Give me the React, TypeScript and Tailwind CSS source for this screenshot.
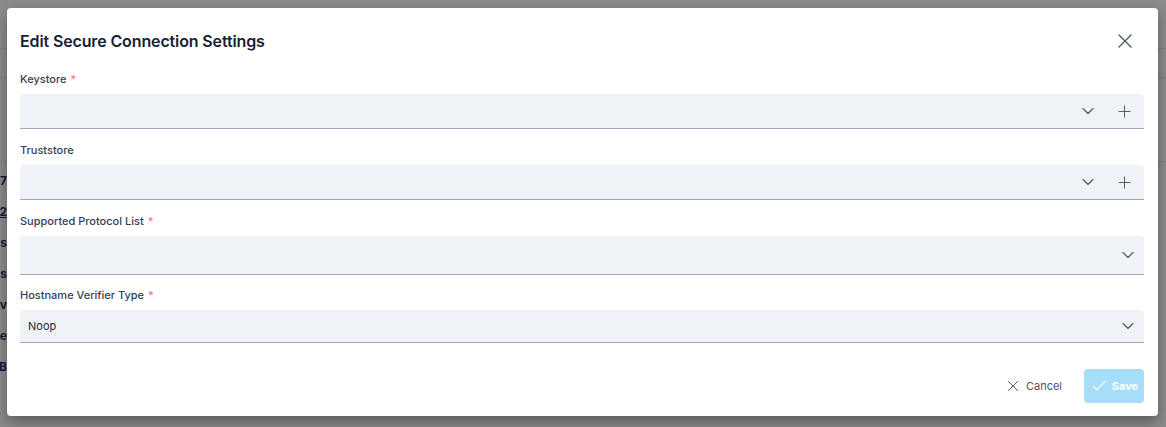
import React from "react";
import { X, ChevronDown, Plus, Check } from "lucide-react";

const font = { fontFamily: "Inter, 'Noto Sans', sans-serif" };

function Label({ text, required }: { text: string; required?: boolean }) {
  return (
    <div className="h-[16px] text-[11px] leading-[16px] font-medium text-[#374151]">
      {text}
      {required && <span className="ml-[4px] text-[#f87171]">*</span>}
    </div>
  );
}

function SelectWithAdd() {
  return (
    <div className="mt-[7px] h-[35px] flex bg-[#eff2f7] rounded-t-[4px]">
      <div className="flex-1 flex items-center justify-end pr-[8px] border-b border-[#9eaabd]">
        <ChevronDown size={20} strokeWidth={1.3} className="text-[#4b5563]" />
      </div>
      <div className="w-[38px] flex items-center justify-center border-b border-[#9eaabd]">
        <Plus size={19} strokeWidth={1.2} className="text-[#4b5563] -ml-[1px]" />
      </div>
    </div>
  );
}

function Select({ h, value }: { h: string; value?: string }) {
  return (
    <div
      className={`mt-[7px] ${h} flex items-center justify-between bg-[#eff2f7] rounded-t-[4px] border-b border-[#9eaabd] pl-[8px] pr-[6px]`}
    >
      <span className="text-[11px] text-[#1f2937]">{value}</span>
      <ChevronDown size={20} strokeWidth={1.3} className="text-[#4b5563]" />
    </div>
  );
}

const rows = ["7", "2", "s", "s", "v", "e", "B"];

export default function App() {
  return (
    <div className="w-[1166px] h-[427px] relative overflow-hidden bg-[#8b8b8b]" style={font}>
      {/* background page */}
      <div className="flex flex-col">
        <div className="h-[49px] border-b border-[#7c7c7c]" />
        <div className="h-[29px] border-b border-[#7c7c7c]" />
        <div className="h-[84px] border-b border-[#7c7c7c]" />
        <div className="flex flex-col pt-[3px]">
          {rows.map((r, i) => (
            <div key={i} className="h-[31px] w-[7px] flex items-center justify-end">
              <span className={`text-[12px] font-bold text-[#0f1b3a] ${i === 1 ? "underline" : ""}`}>
                {r}
              </span>
            </div>
          ))}
        </div>
      </div>

      {/* modal */}
      <div className="absolute left-[7px] top-[8px] w-[1151px] h-[408px] bg-white rounded-[4px] shadow-[0_6px_14px_rgba(0,0,0,0.35)] pl-[13px] pr-[14px] flex flex-col">
        <div className="mt-[21px] h-[24px] flex items-center justify-between">
          <h2 className="text-[16px] font-semibold tracking-[-0.13px] text-[#161f33]">Edit Secure Connection Settings</h2>
          <X size={24} strokeWidth={1.3} className="text-[#4b5563] mr-[7px]" />
        </div>

        <div className="mt-[18px]">
          <Label text="Keystore" required />
          <SelectWithAdd />
        </div>
        <div className="mt-[13px]">
          <Label text="Truststore" />
          <SelectWithAdd />
        </div>
        <div className="mt-[13px]">
          <Label text="Supported Protocol List" required />
          <Select h="h-[39px]" />
        </div>
        <div className="mt-[12px]">
          <Label text="Hostname Verifier Type" required />
          <Select h="h-[33px]" value="Noop" />
        </div>

        <div className="mt-[26px] flex justify-end items-center">
          <button className="h-[34px] flex items-center gap-[4px] px-[12px] text-[11px] text-[#4b5563]">
            <X size={18} strokeWidth={1.3} className="text-[#4b5563]" />
            <span>Cancel</span>
          </button>
          <button className="ml-[10px] h-[34px] w-[60px] flex items-center justify-center gap-[4px] rounded-[4px] bg-[#a6ddf8] text-[11px] font-bold text-white">
            <Check size={18} strokeWidth={1.5} className="text-white" />
            <span>Save</span>
          </button>
        </div>
      </div>
    </div>
  );
}
